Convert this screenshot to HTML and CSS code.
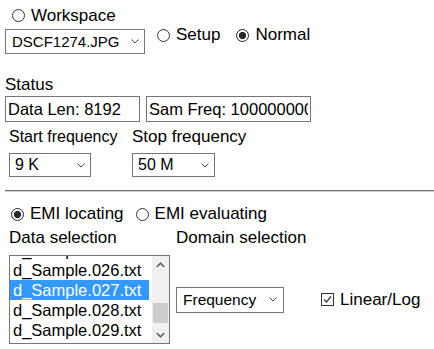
FILE: index.html
```html
<!DOCTYPE html>
<html>
<head>
<meta charset="utf-8">
<link rel="stylesheet" href="styles.css">
</head>
<body>
<div class="page">
  <div class="row r1">
    <label class="opt"><span class="radio"></span>Workspace</label>
  </div>
  <div class="row r2">
    <div class="select sel-file"><span>DSCF1274.JPG</span><svg class="chev" width="8" height="5" viewBox="0 0 8 5"><polyline points="0.5,0.5 4,4 7.5,0.5"/></svg></div>
    <label class="opt opt-setup"><span class="radio"></span>Setup</label>
    <label class="opt opt-normal"><span class="radio checked"></span>Normal</label>
  </div>
  <div class="status-label">Status</div>
  <div class="row inputs">
    <input class="field f1" type="text" value="Data Len: 8192" readonly>
    <input class="field f2" type="text" value="Sam Freq: 1000000000" readonly>
  </div>
  <div class="freq-grid">
    <div class="lbl lbl-start">Start frequency</div>
    <div class="lbl">Stop frequency</div>
    <div class="select sel-freq"><span>9 K</span><svg class="chev" width="8" height="5" viewBox="0 0 8 5"><polyline points="0.5,0.5 4,4 7.5,0.5"/></svg></div>
    <div class="select sel-freq sel-stop"><span>50 M</span><svg class="chev" width="8" height="5" viewBox="0 0 8 5"><polyline points="0.5,0.5 4,4 7.5,0.5"/></svg></div>
  </div>
  <div class="rule"></div>
  <div class="row emi">
    <label class="opt"><span class="radio checked"></span>EMI locating</label>
    <label class="opt opt-eval"><span class="radio"></span>EMI evaluating</label>
  </div>
  <div class="sel-grid">
    <div class="lbl">Data selection</div>
    <div class="lbl lbl-domain">Domain selection</div>
    <div class="listbox">
      <div class="items">
        <div class="item">d_Sample.025.txt</div>
        <div class="item">d_Sample.026.txt</div>
        <div class="item selected">d_Sample.027.txt</div>
        <div class="item">d_Sample.028.txt</div>
        <div class="item">d_Sample.029.txt</div>
      </div>
      <div class="scrollbar">
        <div class="sb-btn"><svg width="9" height="6" viewBox="0 0 9 6"><polyline points="0.8,5 4.5,1.2 8.2,5"/></svg></div>
        <div class="sb-track"><div class="sb-thumb"></div></div>
        <div class="sb-btn"><svg width="9" height="6" viewBox="0 0 9 6"><polyline points="0.8,1 4.5,4.8 8.2,1"/></svg></div>
      </div>
    </div>
    <div class="domain-row">
      <div class="select sel-domain"><span>Frequency</span><svg class="chev" width="8" height="5" viewBox="0 0 8 5"><polyline points="0.5,0.5 4,4 7.5,0.5"/></svg></div>
      <label class="opt opt-check"><span class="checkbox"><svg width="11" height="11" viewBox="0 0 11 11"><polyline points="2,5.5 4.5,8 9,2.5"/></svg></span>Linear/Log</label>
    </div>
  </div>
</div>
</body>
</html>
```

FILE: styles.css
```css
html, body {
  margin: 0;
  padding: 0;
  background: #ffffff;
}
body {
  font-family: "Liberation Sans", Arial, sans-serif;
  font-size: 17px;
  line-height: 20px;
  color: #000000;
}
.page {
  padding-top: 6px;
  padding-left: 5px;
}
.row {
  display: flex;
}
.r1 {
  height: 19px;
  align-items: center;
  padding-left: 7px;
}
.opt {
  display: flex;
  align-items: center;
  height: 20px;
  white-space: nowrap;
}
.radio {
  box-sizing: border-box;
  width: 13px;
  height: 13px;
  border: 1px solid #333333;
  border-radius: 50%;
  margin-right: 6px;
  flex: none;
  background: #ffffff;
}
.radio.checked {
  border: 1.5px solid #222222;
  background: radial-gradient(circle, #2a2a2a 0 3.3px, #ffffff 3.9px);
}
.r2 {
  align-items: flex-start;
  height: 29px;
}
.select {
  box-sizing: border-box;
  display: flex;
  align-items: center;
  justify-content: space-between;
  border: 1px solid #767676;
  background: #ffffff;
  font-size: 15px;
  white-space: nowrap;
}
.chev {
  flex: none;
  fill: none;
  stroke: #4a4a4a;
  stroke-width: 1;
}
.sel-file {
  margin-top: 4px;
  width: 140px;
  height: 25px;
  padding: 0 5px 0 6px;
}
.opt-setup {
  margin-left: 12px;
}
.opt-normal {
  margin-left: 16px;
}
.status-label {
  margin-top: 21px;
  height: 20px;
}
.inputs {
  margin-top: 1px;
  gap: 6px;
}
.field {
  box-sizing: border-box;
  height: 26px;
  border: 1px solid #767676;
  padding: 0 2px;
  margin: 0;
  font-family: "Liberation Sans", Arial, sans-serif;
  font-size: 16.5px;
  color: #000000;
  background: #ffffff;
  outline: none;
}
.f1 {
  width: 135px;
}
.f2 {
  width: 165px;
}
.freq-grid {
  display: grid;
  grid-template-columns: 123px auto;
  grid-template-rows: 20px 24px;
  row-gap: 6px;
  margin-top: 5px;
  padding-left: 4px;
}
.lbl {
  white-space: nowrap;
  height: 20px;
}
.lbl-start {
  font-size: 16px;
}
.sel-freq {
  width: 82px;
  height: 24px;
  padding: 0 5px 0 5px;
  font-size: 16px;
}
.sel-stop {
  width: 83px;
}
.rule {
  margin-top: 13px;
  height: 1px;
  border-top: 1px solid #6f6f6f;
  background: #cfcfcf;
}
.emi {
  margin-top: 12px;
  padding-left: 6px;
}
.opt-eval {
  margin-left: 12px;
}
.sel-grid {
  display: grid;
  grid-template-columns: 167px auto;
  grid-template-rows: 20px auto;
  row-gap: 7px;
  margin-top: 4px;
  padding-left: 4px;
}
.listbox {
  box-sizing: border-box;
  width: 161px;
  height: 89px;
  border: 1px solid #767676;
  display: flex;
  overflow: hidden;
}
.items {
  flex: 1;
  margin-top: -16px;
  padding-right: 3px;
  font-size: 16.5px;
}
.item {
  height: 20px;
  line-height: 20px;
  padding-left: 3px;
  white-space: nowrap;
  overflow: hidden;
}
.item.selected {
  background: #3399ff;
  color: #ffffff;
}
.scrollbar {
  width: 17px;
  flex: none;
  display: flex;
  flex-direction: column;
  background: #f0f0f0;
}
.sb-btn {
  height: 17px;
  display: flex;
  align-items: center;
  justify-content: center;
}
.sb-btn svg {
  fill: none;
  stroke: #606060;
  stroke-width: 1.6;
}
.sb-track {
  flex: 1;
  display: flex;
  flex-direction: column;
  justify-content: flex-end;
  padding: 0 1px;
}
.sb-thumb {
  height: 20px;
  margin-bottom: 3px;
  background: #cdcdcd;
}
.domain-row {
  display: flex;
  align-items: center;
}
.sel-domain {
  width: 108px;
  height: 26px;
  padding: 0 6px 0 6px;
  font-size: 15.5px;
}
.opt-check {
  margin-left: 37px;
}
.checkbox {
  box-sizing: border-box;
  width: 13px;
  height: 13px;
  border: 1px solid #333333;
  margin-right: 6px;
  display: flex;
  align-items: center;
  justify-content: center;
  flex: none;
}
.checkbox svg {
  fill: none;
  stroke: #333333;
  stroke-width: 1.2;
}
```
